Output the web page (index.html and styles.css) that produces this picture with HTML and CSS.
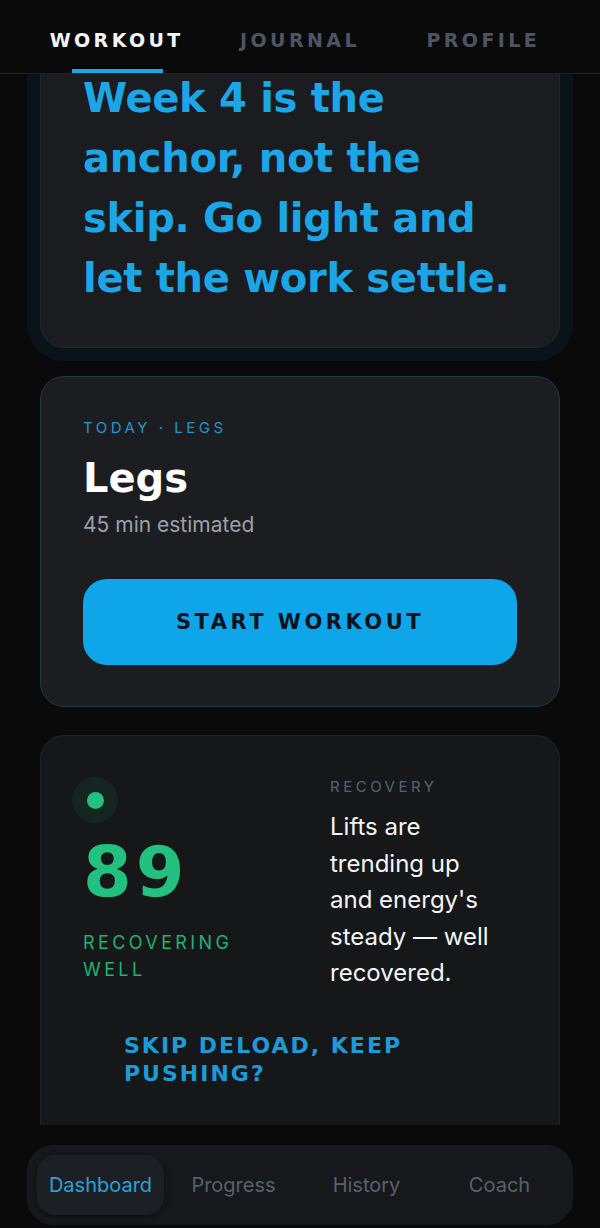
FILE: index.html
```html
<!DOCTYPE html>
<html lang="en">
<head>
  <meta charset="UTF-8">
  <meta name="viewport" content="width=device-width, initial-scale=1.0">
  <title>Workout</title>
  <link rel="stylesheet" href="styles.css">
</head>
<body>
  <header class="topbar">
    <a class="tab active">WORKOUT</a>
    <a class="tab">JOURNAL</a>
    <a class="tab">PROFILE</a>
  </header>

  <main class="feed">
    <div class="stack">
      <section class="card card-note">
        <p class="note">Week 4 is the anchor, not the skip. Go light and let the work settle.</p>
      </section>

      <section class="card card-today">
        <div class="eyebrow">TODAY · LEGS</div>
        <h2 class="title">Legs</h2>
        <div class="sub">45 min estimated</div>
        <button class="start">START WORKOUT</button>
      </section>

      <section class="card card-recovery">
        <div class="recovery-grid">
          <div class="score-col">
            <div class="pulse"><span class="dot"></span></div>
            <div class="score">89</div>
            <div class="score-label">RECOVERING WELL</div>
          </div>
          <div class="text-col">
            <div class="eyebrow gray">RECOVERY</div>
            <p class="summary">Lifts are trending up and energy's steady — well recovered.</p>
          </div>
        </div>
        <button class="skip">SKIP DELOAD, KEEP PUSHING?</button>
      </section>
    </div>
  </main>

  <footer class="bottombar">
    <nav class="bottomnav">
      <a class="nav-item active">Dashboard</a>
      <a class="nav-item">Progress</a>
      <a class="nav-item">History</a>
      <a class="nav-item">Coach</a>
    </nav>
  </footer>
</body>
</html>
```

FILE: styles.css
```css
html, body {
  margin: 0;
  height: 100%;
}
body {
  background-color: #0a0a0b;
  font-family: Inter, "Noto Sans", sans-serif;
  color: #f2f4f7;
  display: flex;
  flex-direction: column;
  height: 1228px;
  overflow: hidden;
}

/* top tabs */
.topbar {
  display: flex;
  height: 73px;
  padding: 0 25px;
  border-bottom: 1px solid #1f2125;
  flex-shrink: 0;
  position: relative;
  z-index: 2;
  background-color: #0a0a0b;
}
.tab {
  flex: 1;
  display: flex;
  align-items: center;
  justify-content: center;
  position: relative;
  font-family: "DejaVu Sans", sans-serif;
  font-weight: bold;
  font-size: 19px;
  letter-spacing: 3.4px;
  color: #4d5562;
  padding-top: 7px;
}
.tab.active {
  color: #f4f5f7;
}
.tab.active::after {
  content: "";
  position: absolute;
  left: 47px;
  right: 45px;
  bottom: 0;
  height: 4px;
  background-color: #1ea5e6;
}

/* scrolling feed */
.feed {
  flex: 1;
  overflow: hidden;
  padding: 0 40px;
}
.stack {
  display: flex;
  flex-direction: column;
  gap: 28px;
  margin-top: -48px;
}
.card {
  border-radius: 24px;
  padding: 41px 42px;
}
.card-note {
  background-color: #1a1c20;
  border: 1px solid #1d272d;
  box-shadow: 0 0 0 13px #09141a;
  padding-top: 41px;
  padding-bottom: 39px;
}
.note {
  margin: 0;
  font-family: "DejaVu Sans", sans-serif;
  font-weight: bold;
  font-size: 40px;
  line-height: 60px;
  letter-spacing: -0.3px;
  color: #1da6e7;
}

.card-today {
  background-color: #1b1d21;
  border: 1px solid #1f3a49;
}
.eyebrow {
  font-size: 15px;
  line-height: 20px;
  letter-spacing: 3.5px;
  color: #2596cf;
}
.eyebrow.gray {
  color: #5a6271;
}
.title {
  margin: 16px 0 0;
  font-family: "DejaVu Sans", sans-serif;
  font-weight: bold;
  font-size: 40px;
  line-height: 48px;
  color: #ffffff;
}
.sub {
  margin-top: 9px;
  font-size: 21px;
  line-height: 28px;
  color: #9ca1a9;
}
.start {
  display: block;
  width: 100%;
  height: 86px;
  margin-top: 40px;
  border: none;
  border-radius: 24px;
  background-color: #0fa5e9;
  color: #08131c;
  font-family: "DejaVu Sans", sans-serif;
  font-weight: bold;
  font-size: 21px;
  letter-spacing: 3.5px;
  cursor: pointer;
}

.card-recovery {
  background-color: #151719;
  border: 1px solid #202327;
  padding-bottom: 80px;
}
.recovery-grid {
  display: grid;
  grid-template-columns: 191px 170px;
  column-gap: 56px;
}
.pulse {
  width: 46px;
  height: 46px;
  margin-left: -11px;
  border-radius: 50%;
  background-color: #13261f;
  display: flex;
  align-items: center;
  justify-content: center;
}
.dot {
  width: 17px;
  height: 17px;
  border-radius: 50%;
  background-color: #22c17f;
}
.score {
  margin-top: 14px;
  font-family: "DejaVu Sans", sans-serif;
  font-weight: bold;
  font-size: 70px;
  line-height: 70px;
  letter-spacing: 4px;
  color: #22c17f;
}
.score-label {
  margin-top: 22px;
  font-size: 18px;
  line-height: 27px;
  letter-spacing: 3.4px;
  color: #1fb277;
}
.summary {
  margin: 12px 0 0;
  font-size: 24px;
  line-height: 36.6px;
  color: #f4f5f7;
}
.skip {
  display: block;
  width: 100%;
  margin-top: 40px;
  padding: 0 41px;
  border: none;
  background: none;
  text-align: left;
  font-family: "DejaVu Sans", sans-serif;
  font-weight: bold;
  font-size: 22px;
  line-height: 28px;
  letter-spacing: 2px;
  color: #1d9bd9;
  cursor: pointer;
}

/* bottom navigation */
.bottombar {
  flex-shrink: 0;
  padding: 20px 27px 3px;
}
.bottomnav {
  display: grid;
  grid-template-columns: repeat(4, 1fr);
  gap: 6px;
  height: 80px;
  padding: 10px;
  box-sizing: border-box;
  border-radius: 26px;
  background-color: #16181b;
}
.nav-item {
  display: flex;
  align-items: center;
  justify-content: center;
  border-radius: 18px;
  font-size: 20px;
  color: #59616d;
}
.nav-item.active {
  background-color: #1c1f23;
  color: #2ea1d7;
  box-shadow: 0 2px 6px rgba(0, 0, 0, 0.35);
}
```
